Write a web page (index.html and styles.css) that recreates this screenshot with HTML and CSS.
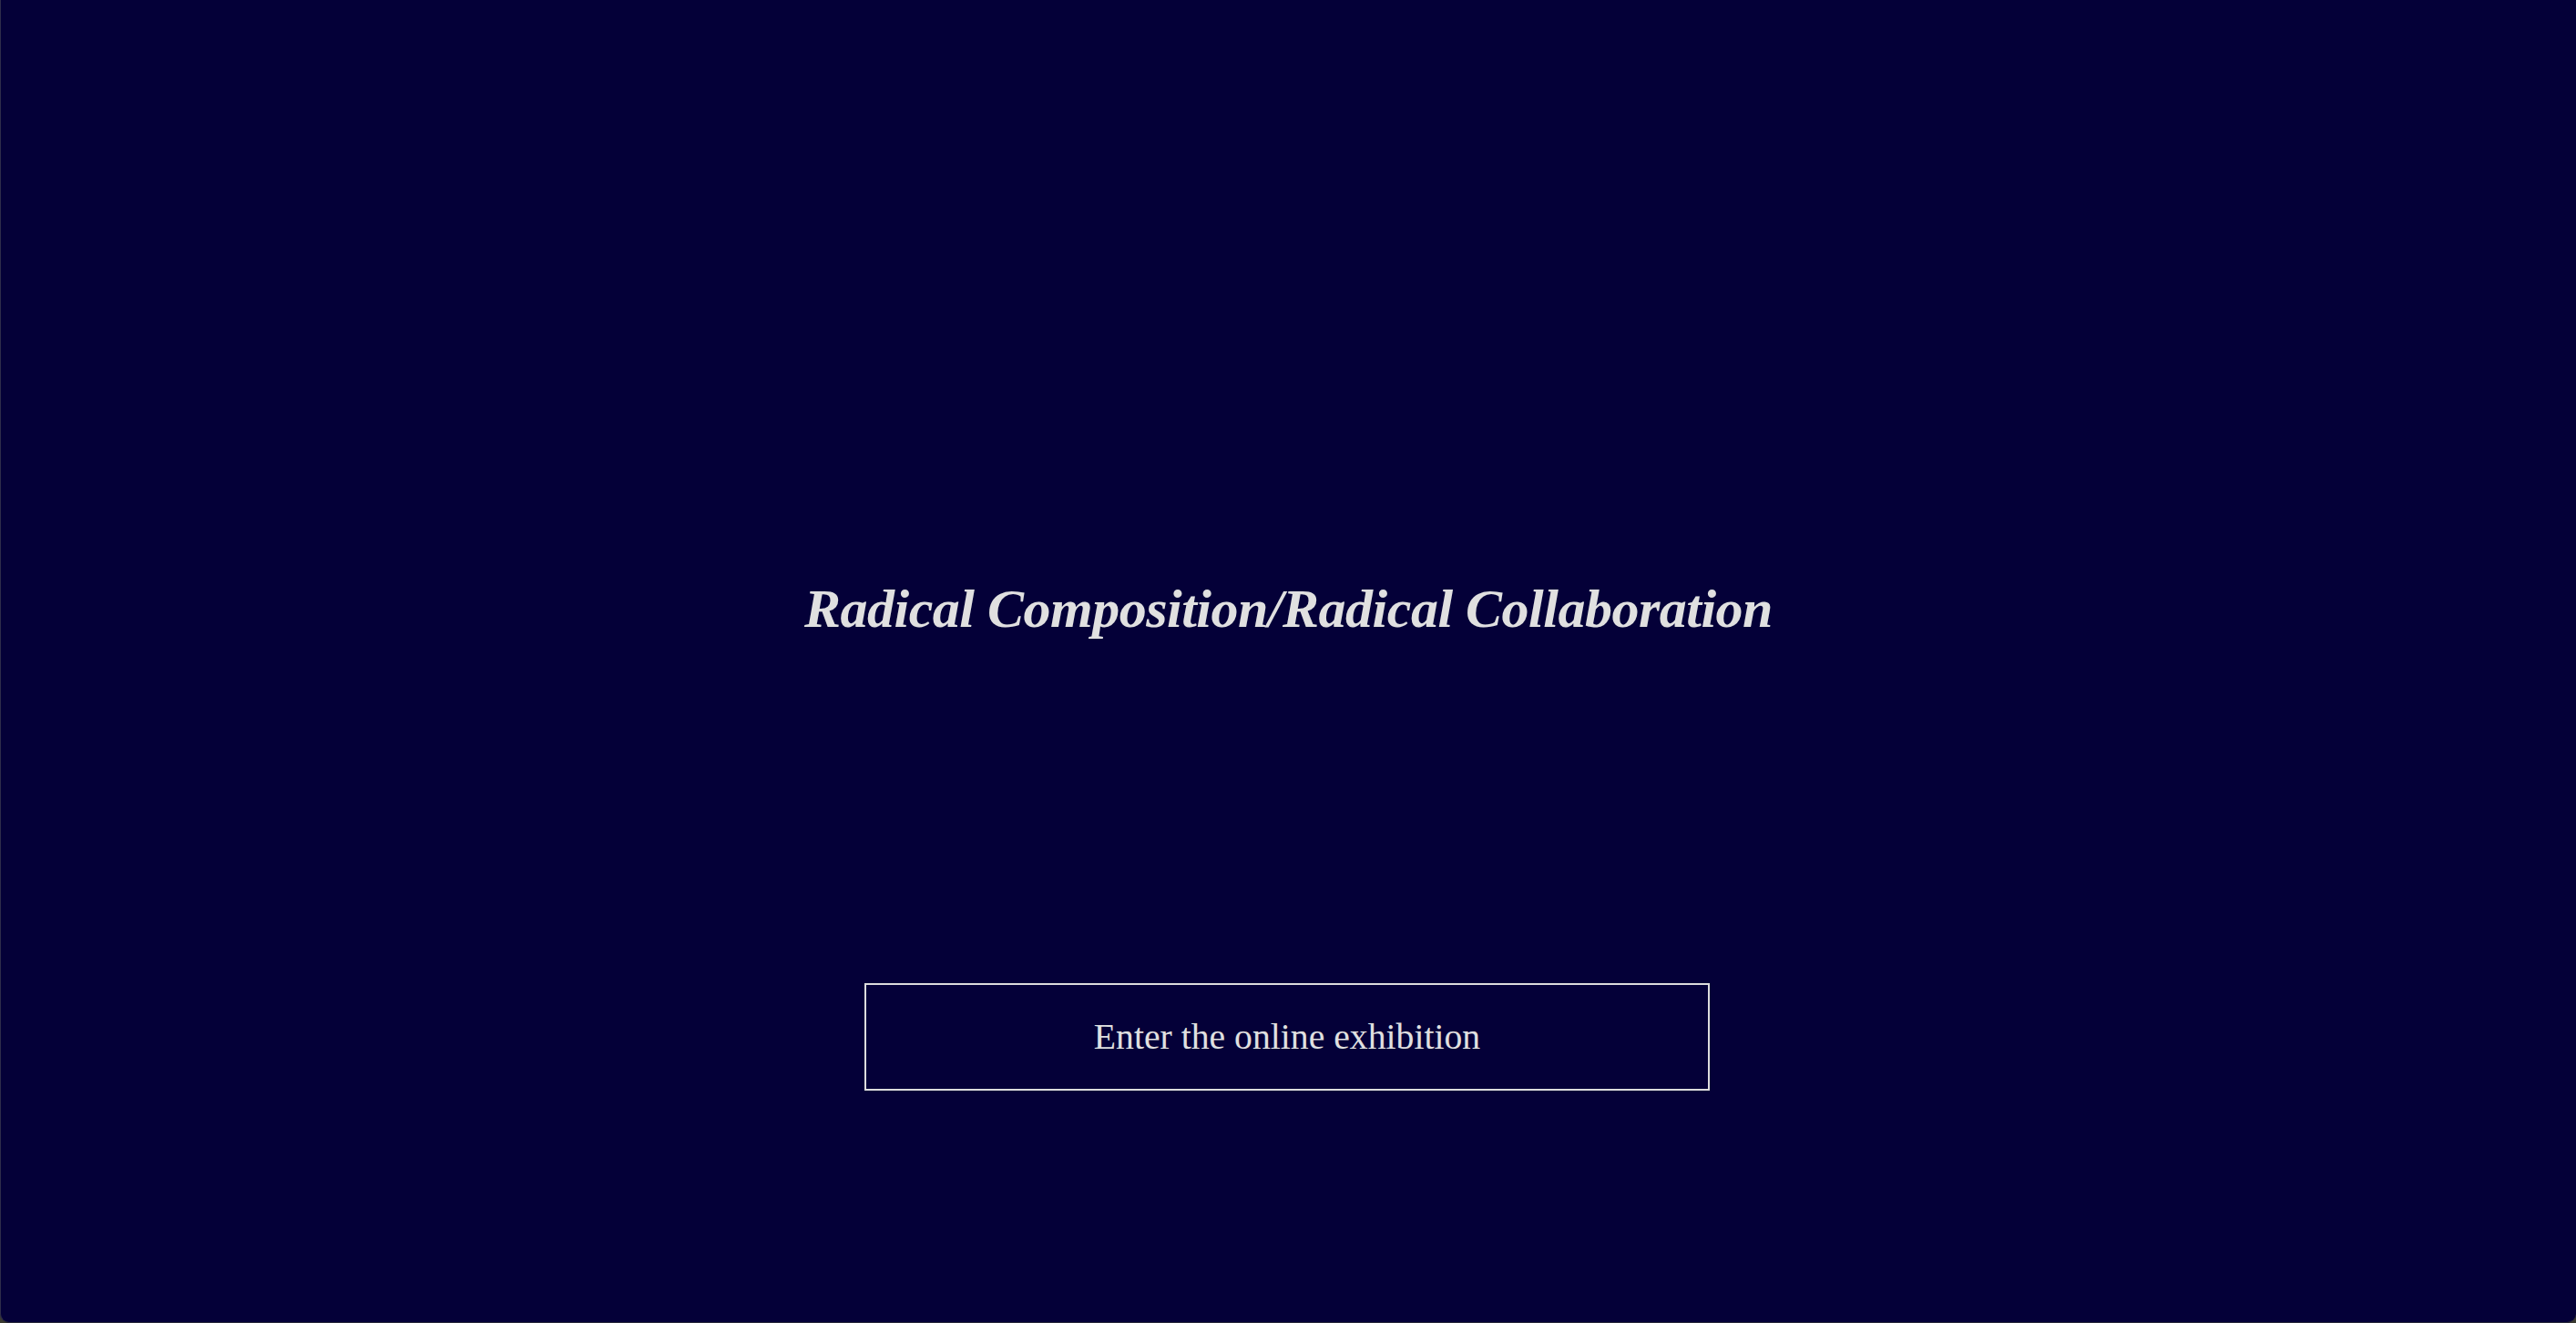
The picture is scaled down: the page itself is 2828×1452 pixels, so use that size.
FILE: index.html
```html
<!DOCTYPE html>
<html lang="en">
<head>
<meta charset="utf-8">
<title>Radical Composition/Radical Collaboration</title>
<link rel="stylesheet" href="styles.css">
</head>
<body>
<main class="page">
  <h1 class="title">Radical Composition/Radical Collaboration</h1>
  <a class="enter" href="#">Enter the online exhibition</a>
</main>
</body>
</html>
```
FILE: styles.css
```css
html, body {
  margin: 0;
  padding: 0;
}
body {
  background: #3a3a30;
  width: 2828px;
  height: 1452px;
  overflow: hidden;
}
.page {
  box-sizing: border-box;
  width: 2828px;
  height: 1452px;
  background: #040038;
  border-left: 1px solid #2e2c4a;
  border-bottom: 1px solid #2a2a3a;
  border-radius: 0 0 10px 10px;
  display: flex;
  flex-direction: column;
  align-items: center;
  padding-top: 632px;
  font-family: "Liberation Serif", "Times New Roman", serif;
  color: #e0e0e0;
}
.title {
  margin: 0;
  font-size: 60px;
  line-height: 72px;
  font-weight: bold;
  font-style: italic;
  letter-spacing: -0.5px;
  color: #e0e0e0;
}
.enter {
  box-sizing: border-box;
  margin-top: 375px;
  margin-right: 3px;
  width: 928px;
  height: 118px;
  border: 2px solid #dcdcdc;
  display: flex;
  align-items: center;
  justify-content: center;
  font-size: 39.7px;
  color: #e0e0e0;
  text-decoration: none;
}
```
